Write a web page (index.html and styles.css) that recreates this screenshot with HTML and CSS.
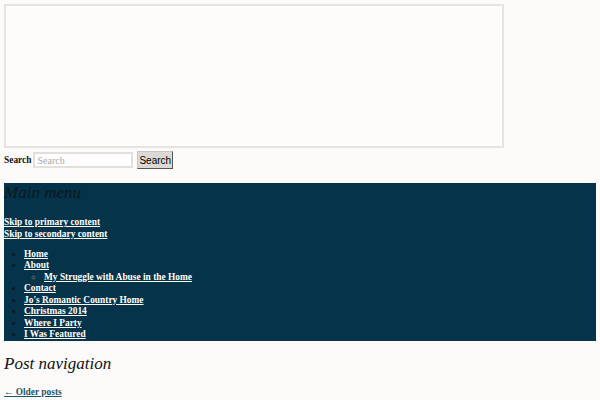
FILE: index.html
```html
<!DOCTYPE html>
<html>
<head>
	<title>Jo's Romantic Country Home</title>
	<link rel="stylesheet" href="styles.css">
</head>
<body>
	<div class="page">
		<div class="banner"></div>

		<form class="search-form">
			<label for="s">Search</label>
			<input id="s" type="text" placeholder="Search">
			<button type="button">Search</button>
		</form>

		<nav class="main-nav">
			<h3 class="menu-title">Main menu</h3>
			<div class="skip"><a href="#">Skip to primary content</a></div>
			<div class="skip"><a href="#">Skip to secondary content</a></div>
			<ul class="menu">
				<li><a href="#">Home</a></li>
				<li><a href="#">About</a>
					<ul>
						<li><a href="#">My Struggle with Abuse in the Home</a></li>
					</ul>
				</li>
				<li><a href="#">Contact</a></li>
				<li><a href="#">Jo's Romantic Country Home</a></li>
				<li><a href="#">Christmas 2014</a></li>
				<li><a href="#">Where I Party</a></li>
				<li><a href="#">I Was Featured</a></li>
			</ul>
		</nav>

		<h3 class="post-nav-title">Post navigation</h3>
		<div class="older"><a href="#">&larr; Older posts</a></div>
	</div>
</body>
</html>
```

FILE: styles.css
```css
/* general */
body {
	margin: 0;
	background: #fcfbf9;
	font-family: "Liberation Serif", "DejaVu Serif", serif;
	font-size: 9.4px;
	line-height: 1.15;
	color: #111;
}
.page {
	padding: 4px;
}
a {
	color: #fff;
	font-weight: bold;
}

/* header */
.banner {
	width: 496px;
	height: 140px;
	border: 2px solid #e6e4e1;
	background: #fdfcfb;
}
.search-form {
	display: flex;
	align-items: center;
	margin: 3px 0 14px;
}
.search-form label {
	font-weight: bold;
	margin-right: 2px;
}
.search-form input {
	width: 92px;
	height: 10px;
	padding: 1px 2px;
	border: 2px solid #e2e0dd;
	font-family: "Liberation Serif", serif;
	font-size: 10px;
	background: #fff;
}
.search-form input::placeholder {
	color: #aaa;
}
.search-form button {
	margin-left: 4px;
	padding: 0 1px;
	height: 18px;
	font-family: "Liberation Sans", Arial, sans-serif;
	font-size: 10px;
	color: #000;
	background: #dcd9d4;
	border: 1px solid #c8c5c0;
	border-right-color: #555;
	border-bottom-color: #555;
}

/* nav */
.main-nav {
	background: #04334a;
}
.menu-title {
	margin: 0 0 14px;
	font-family: "Liberation Serif", serif;
	font-style: italic;
	font-weight: normal;
	font-size: 17px;
	line-height: 19px;
	color: #081820;
}
.skip {
	line-height: 12px;
}
.menu {
	margin: 9px 0 0;
	padding-left: 20px;
	color: #0b1a22;
	line-height: 11.45px;
}
.menu ul {
	margin: 0;
	padding-left: 20px;
	list-style: circle;
	color: #5a6f79;
}

/* post nav */
.post-nav-title {
	margin: 13px 0 14px;
	font-family: "Liberation Serif", serif;
	font-style: italic;
	font-weight: normal;
	font-size: 17px;
	color: #111;
}
.older a {
	color: #1d5566;
}
```
